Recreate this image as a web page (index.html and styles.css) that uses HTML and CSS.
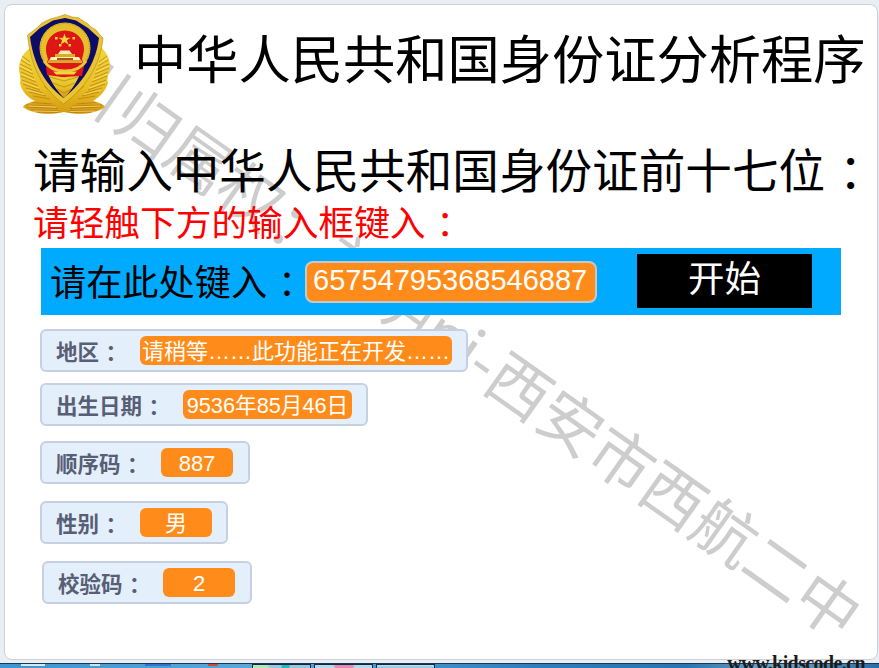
FILE: index.html
```html
<!DOCTYPE html>
<html lang="zh-CN">
<head>
<meta charset="utf-8">
<title>中华人民共和国身份证分析程序</title>
<link rel="stylesheet" href="styles.css">
</head>
<body>
<main class="stage">
  <div class="watermark">引归属权：刘明ni-西安市西航二中</div>
  <header class="header">
    <svg class="emblem" viewBox="18 14 92 101" aria-label="警徽">
      <defs>
        <linearGradient id="gold" x1="0" y1="0" x2="0" y2="1">
          <stop offset="0" stop-color="#f2d640"/>
          <stop offset="0.6" stop-color="#e8bf22"/>
          <stop offset="1" stop-color="#d59a12"/>
        </linearGradient>
        <filter id="soft"><feGaussianBlur stdDeviation="0.3"/></filter>
      </defs>
      <g filter="url(#soft)">
        <path fill="url(#gold)" d="M30 48 C22 54 19 62 19 70 C20 76 21 80 20 83 C22 92 28 98 35 101 C27 103 24 105 23 107 C34 115 52 115 64 112 C76 115 94 115 105 107 C104 105 101 103 93 101 C100 97 106 90 108 83 C106 78 110 73 110 66 C110 58 106 52 101 47 L64 100 Z"/>
        <g fill="none" stroke="#b5760e" stroke-width="0.7">
          <path d="M22 56 L30 62 M21 60 L31 66 M20 64 L32 70 M20 68 L33 74 M21 72 L34 78 M21 76 L36 82 M22 80 L38 86 M23 84 L40 90 M26 88 L43 93 M29 92 L46 96 M33 96 L50 99"/>
          <path d="M107 56 L99 62 M108 60 L98 66 M109 64 L96 70 M109 68 L95 74 M108 72 L94 78 M107 76 L92 82 M106 80 L90 86 M105 84 L88 90 M102 88 L85 93 M99 92 L82 96 M95 96 L78 99"/>
          <path d="M26 105 L56 106 M27 107 L58 108.500 M31 110 L58 110.500 M37 112 L58 112.500 M32 102.500 L52 104"/>
          <path d="M102 105 L72 106 M101 107 L70 108.500 M97 110 L70 110.500 M91 112 L70 112.500 M96 102.500 L76 104"/>
          <path d="M44 86 L52 93 M47 84 L55 92 M51 83 L58 91 M55 84 L61 92 M84 86 L76 93 M81 84 L73 92 M77 83 L70 91 M73 84 L67 92"/>
        </g>
        <g fill="none" stroke="#fbeb8e" stroke-width="0.6">
          <path d="M22 58 L30 64 M20 66 L32 72 M21 74 L35 80 M23 82 L39 88 M27 90 L44 94.500 M28 106 L56 107 M33 111 L58 111.500"/>
          <path d="M107 58 L99 64 M109 66 L96 72 M108 74 L93 80 M106 82 L89 88 M101 90 L84 94.500 M100 106 L72 107 M95 111 L70 111.500"/>
        </g>
        <path fill="#e9c330" stroke="#a97c10" stroke-width="0.5" d="M65 14.500 L72 17 L78 17.500 L88 24 L91 27 L96 30 L100 35 L103 38 C101 60 90 85 63.500 104 C40 87 30 62 27.500 35 L33 31 L38 27 L42 23 L50 19 L56 17.500 Z"/>
        <path fill="#0c0a68" d="M65 18 L76 20.500 L88 28 L99 38 C96 60 86 80 63.500 98 C42 82 33 60 30 37 L40 28 L53 20.500 Z"/>
        <path fill="url(#gold)" d="M47 72 C52 84 58 92 64 98 C70 92 76 84 81 72 L64 77 Z"/>
        <path fill="none" stroke="#a07a12" stroke-width="0.6" d="M50 77 L64 81 L78 77 M53 83 L64 87 L75 83 M57 89 L64 93 L71 89"/>
        <circle cx="65" cy="48" r="25.500" fill="#e6bf2a"/>
        <circle cx="65" cy="48" r="24.500" fill="none" stroke="#b98a14" stroke-width="1" stroke-dasharray="1.200 1.400"/>
        <path fill="#de1216" d="M65 30.500 C54 30.500 46 39 46 49 C46 53 47 56 48 59 L46 68 L47 75 L62 77 L82 76 L84 67 L82 59 C83 55 84 52 84 49 C84 39 76 30.500 65 30.500 Z"/>
        <path fill="#f2d83e" d="M64.500 33.500 L66 37.700 L70.500 37.700 L66.900 40.300 L68.200 44.500 L64.500 41.900 L60.800 44.500 L62.100 40.300 L58.500 37.700 L63 37.700 Z"/>
        <path fill="#f2d83e" d="M55 37 h2.600 v2.600 h-2.600 Z M72.500 37 h2.600 v2.600 h-2.600 Z M59 44 h2.400 v2.400 h-2.400 Z M68.500 44 h2.400 v2.400 h-2.400 Z"/>
        <path fill="#f7ecb4" d="M58 54 L60.500 50.500 L69.500 50.500 L72 54 Z"/>
        <path fill="#dcae28" d="M55 54 H75 V57 H55 Z"/>
        <path fill="#fff2b0" d="M51 57 H79 L81 60.500 H49 Z"/>
        <path fill="#a8551c" d="M57 58 H73 V60 H57 Z"/>
        <path fill="#d9a924" d="M48 60.500 H82 V63 H48 Z"/>
        <path fill="none" stroke="#eac835" stroke-width="3" d="M44 61 C49 69 57 71 65 71 C73 71 81 69 86 61"/>
        <path fill="#f2d640" d="M53 71.500 H77 L74 74.500 H56 Z"/>
      </g>
    </svg>
    <h1 class="title">中华人民共和国身份证分析程序</h1>
  </header>

  <h2 class="heading">请输入中华人民共和国身份证前十七位<span class="colon">：</span></h2>
  <p class="hint">请轻触下方的输入框键入<span class="colon">：</span></p>

  <section class="entry">
    <span class="entry-label">请在此处键入<span class="colon">：</span></span>
    <span class="entry-value">65754795368546887</span>
    <button class="start" type="button"><span class="start-text">开始</span></button>
  </section>

  <section class="monitors">
    <div class="monitor monitor-region">
      <span class="monitor-label">地区<span class="colon">：</span></span>
      <span class="monitor-value value-region">请稍等……此功能正在开发……</span>
    </div>
    <div class="monitor monitor-birth">
      <span class="monitor-label">出生日期<span class="colon">：</span></span>
      <span class="monitor-value value-birth">9536年85月46日</span>
    </div>
    <div class="monitor monitor-order">
      <span class="monitor-label">顺序码<span class="colon">：</span></span>
      <span class="monitor-value value-short">887</span>
    </div>
    <div class="monitor monitor-gender">
      <span class="monitor-label">性别<span class="colon">：</span></span>
      <span class="monitor-value value-short">男</span>
    </div>
    <div class="monitor monitor-check">
      <span class="monitor-label">校验码<span class="colon">：</span></span>
      <span class="monitor-value value-short">2</span>
    </div>
  </section>
</main>

<footer class="taskbar">
  <span class="chip chip-white"></span>
  <span class="chip chip-white-small"></span>
  <span class="chip chip-blue"></span>
  <span class="chip chip-red"></span>
  <span class="task task-first"></span>
  <span class="task task-second"></span>
  <span class="task"></span>
</footer>
<div class="site-mark">www.kidscode.cn</div>
</body>
</html>
```
FILE: styles.css
```css
* {
  box-sizing: border-box;
}

html,
body {
  height: 668px;
  margin: 0;
  overflow: hidden;
}

body {
  position: relative;
  display: flex;
  flex-direction: column;
  padding-top: 4px;
  background: #e8eef4;
  font-family: "Liberation Sans", "Noto Sans CJK SC", sans-serif;
}

.stage {
  position: relative;
  width: 874px;
  height: 656px;
  margin-left: 4px;
  overflow: hidden;
  background: #fff;
  border: 1px solid #d0d0d0;
  border-radius: 8px;
}

.watermark {
  position: absolute;
  left: 68px;
  top: 29px;
  font: 400 63px/1 "Noto Sans CJK SC", sans-serif;
  color: #cdcdcd;
  white-space: nowrap;
  transform: rotate(35.3deg);
  transform-origin: 0 50%;
}

.header {
  position: relative;
  display: flex;
  align-items: center;
  gap: 24px;
  margin: 9px 0 0 13px;
}

.emblem {
  flex: none;
  width: 92px;
  height: 101px;
}

.title,
.heading,
.hint {
  position: relative;
  margin: 0;
  font-family: "Noto Sans CJK SC", sans-serif;
  font-weight: 400;
  white-space: nowrap;
}

.title {
  font-size: 52.250px;
  line-height: 60px;
  color: #000;
  margin-top: -17px;
}

.colon {
  padding-left: 0.3em;
  letter-spacing: -0.4em;
}

.heading {
  margin: 25px 0 0 28px;
  font-size: 46.600px;
  line-height: 56px;
  color: #000;
}

.hint {
  margin: 3px 0 0 28px;
  font-size: 35.700px;
  line-height: 44px;
  color: #f00;
}

.entry {
  position: relative;
  display: flex;
  align-items: center;
  width: 800px;
  height: 67px;
  margin: 5px 0 0 36px;
  padding-left: 9px;
  background: #0af;
}

.entry-label {
  width: 255px;
  margin-bottom: 3px;
  font: 400 36.200px/44px "Noto Sans CJK SC", sans-serif;
  color: #000;
  white-space: nowrap;
}

.entry-value {
  display: flex;
  align-items: center;
  width: 292px;
  height: 42px;
  padding: 0 0 2px 6px;
  font-size: 29px;
  color: #fff;
  background: #ff8c1a;
  border: 2px solid #c8c8c8;
  border-radius: 8px;
}

.start {
  display: flex;
  align-items: center;
  justify-content: center;
  width: 175px;
  height: 54px;
  margin: 0 0 1px 40px;
  padding: 0 0 8px;
  border: 0;
  background: #000;
  color: #fff;
  font: 400 36.500px/1 "Noto Sans CJK SC", sans-serif;
}

.start-text {
  display: block;
}

.monitors {
  position: relative;
  display: flex;
  flex-direction: column;
  align-items: flex-start;
  margin-left: 35px;
}

.monitor {
  display: flex;
  align-items: center;
  height: 43px;
  padding: 0 14px;
  background: #e4effc;
  border: 2px solid #c6d0e0;
  border-radius: 6px;
}

.monitor-region {
  width: 428px;
  margin-top: 14px;
}

.monitor-birth {
  width: 328px;
  margin-top: 11px;
}

.monitor-order {
  width: 210px;
  margin-top: 15px;
}

.monitor-gender {
  width: 188px;
  margin-top: 17px;
}

.monitor-check {
  width: 210px;
  margin: 17px 0 0 2px;
}

.monitor-label {
  flex: none;
  font: 700 21.500px/1 "Noto Sans CJK SC", sans-serif;
  color: #575e75;
  white-space: nowrap;
}

.monitor-region .monitor-label {
  width: 84px;
}

.monitor-birth .monitor-label {
  width: 127px;
}

.monitor-order .monitor-label,
.monitor-check .monitor-label {
  width: 105px;
}

.monitor-gender .monitor-label {
  width: 84px;
}

.monitor-value {
  flex: none;
  height: 29px;
  font-size: 22px;
  line-height: 31px;
  text-align: center;
  white-space: nowrap;
  color: #fff;
  background: #ff8c1a;
  border-radius: 6px;
}

.value-region {
  width: 312px;
}

.value-birth {
  width: 169px;
  font-size: 21.700px;
}

.value-short {
  width: 72px;
}

.taskbar {
  display: flex;
  flex: none;
  height: 5px;
  margin-top: 3px;
  background: linear-gradient(90deg, #3f95cf 0, #5aa9d9 30%, #2f7db7 62%, #2a75ad 78%, #6fa6c8 88%, #2a6ea6 100%);
  border-top: 1px solid #17385a;
}

.chip {
  display: block;
  height: 2px;
}

.chip-white {
  width: 24px;
  margin-left: 21px;
  background: #d8e8f2;
}

.chip-white-small {
  width: 10px;
  margin-left: 45px;
  background: #cfe2ee;
}

.chip-blue {
  width: 26px;
  margin-left: 45px;
  background: #2f74d0;
}

.chip-red {
  width: 10px;
  margin: 0 34px 0 37px;
  background: #d0443c;
}

.task {
  width: 59px;
  margin-right: 3px;
  background: linear-gradient(#c4e0ee, #8fc0dc);
  border: 1px solid #0d2b45;
  border-bottom: 0;
}

.task-first {
  background: linear-gradient(90deg, #b5e8b0 0, #b5e8b0 24%, #9cc8de 30%, #9cc8de 48%, #2cb8b8 52%, #2cb8b8 62%, #9cc8de 66%);
}

.task-second {
  background: linear-gradient(90deg, #b7d9ea 0, #b7d9ea 32%, #e88ab0 36%, #e88ab0 66%, #b7d9ea 70%);
}

.site-mark {
  position: absolute;
  right: 14px;
  top: 651px;
  font: 700 20px/24px "Liberation Serif", serif;
  letter-spacing: -0.6px;
  color: #1c1c1c;
}
```
